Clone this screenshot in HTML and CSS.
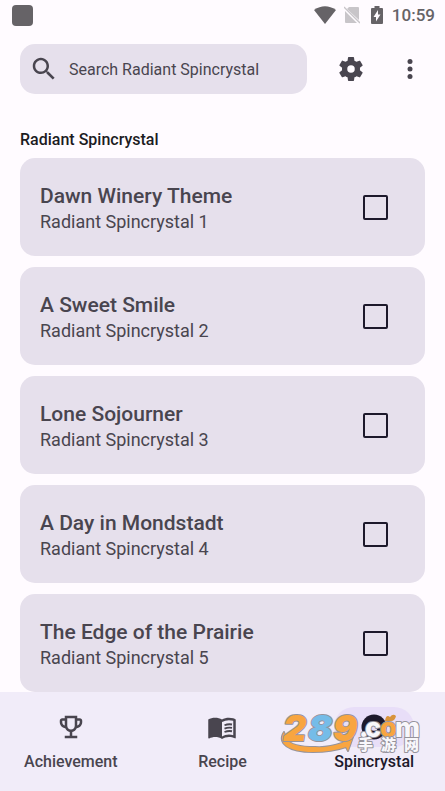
FILE: index.html
```html
<!DOCTYPE html>
<html lang="en">
<head>
<meta charset="utf-8">
<meta name="viewport" content="width=device-width, initial-scale=1">
<title>Radiant Spincrystal</title>
<link rel="stylesheet" href="styles.css">
</head>
<body>
<div class="status">
  <span class="status-app"></span>
  <div class="status-icons">
    <svg width="22" height="18" viewBox="0 0 22 18"><path d="M0 4Q11-3.500 22 4L11 18Z" fill="currentColor"/></svg>
    <svg class="no-sim" width="16" height="18" viewBox="0 0 16 18"><path d="M5 1h9q1 0 1 1v12L3 3zM1 5l12 12H2q-1 0-1-1z" fill="currentColor"/><path d="M0 1l16 16" stroke="currentColor" stroke-width="1.300"/></svg>
    <svg width="12" height="18" viewBox="0 0 12 18"><path d="M3.500 0h5v2H11q1 0 1 1v14q0 1-1 1H1q-1 0-1-1V3q0-1 1-1h2.500z" fill="currentColor"/><path d="M7 4L2.500 11H5v4.500L9.500 8.500H7z" fill="#fffbff"/></svg>
    <time>10:59</time>
  </div>
</div>
<header class="toolbar">
  <label class="search">
    <svg width="30" height="30" viewBox="0 0 24 24"><path fill="currentColor" d="M15.500 14h-.79l-.28-.27C15.410 12.590 16 11.110 16 9.500 16 5.910 13.090 3 9.500 3S3 5.910 3 9.500 5.910 16 9.500 16c1.610 0 3.090-.59 4.230-1.570l.27.28v.79l5 4.990L20.490 19l-4.990-5zm-6 0C7.010 14 5 11.990 5 9.500S7.010 5 9.500 5 14 7.010 14 9.500 11.990 14 9.500 14z"/></svg>
    <input type="search" placeholder="Search Radiant Spincrystal" aria-label="Search Radiant Spincrystal">
  </label>
  <div class="actions">
    <button type="button" aria-label="Settings"><svg width="30" height="30" viewBox="0 0 24 24"><path fill="currentColor" d="M19.140 12.940c.04-.3.06-.61.06-.94 0-.32-.02-.64-.07-.94l2.030-1.580c.18-.14.23-.41.12-.61l-1.920-3.320c-.12-.22-.37-.29-.59-.22l-2.390.96c-.5-.38-1.030-.7-1.620-.94L14.400 2.810c-.04-.24-.24-.41-.48-.41h-3.840c-.24 0-.43.17-.47.41L9.250 5.350C8.660 5.590 8.120 5.920 7.630 6.290L5.240 5.330c-.22-.08-.47 0-.59.22L2.740 8.870c-.12.21-.08.47.12.61l2.030 1.580C4.840 11.360 4.800 11.690 4.800 12s.02.64.07.94l-2.030 1.580c-.18.14-.23.41-.12.61l1.920 3.320c.12.22.37.29.59.22l2.390-.96c.5.38 1.030.7 1.620.94l.36 2.540c.05.24.24.41.48.41h3.840c.24 0 .44-.17.47-.41l.36-2.540c.59-.24 1.130-.56 1.620-.94l2.390.96c.22.08.47 0 .59-.22l1.920-3.320c.12-.22.07-.47-.12-.61L19.140 12.940zM12 15a3 3 0 1 1 0-6 3 3 0 0 1 0 6z"/></svg></button>
    <button type="button" aria-label="More options"><svg width="30" height="30" viewBox="0 0 24 24" fill="currentColor"><circle cx="12" cy="6" r="2"/><circle cx="12" cy="12" r="2"/><circle cx="12" cy="18" r="2"/></svg></button>
  </div>
</header>
<main class="content">
  <h1>Radiant Spincrystal</h1>
  <div class="list">
    <label class="card"><span class="card-text"><span class="title">Dawn Winery Theme</span><span class="subtitle">Radiant Spincrystal 1</span></span><input type="checkbox"></label>
    <label class="card"><span class="card-text"><span class="title">A Sweet Smile</span><span class="subtitle">Radiant Spincrystal 2</span></span><input type="checkbox"></label>
    <label class="card"><span class="card-text"><span class="title">Lone Sojourner</span><span class="subtitle">Radiant Spincrystal 3</span></span><input type="checkbox"></label>
    <label class="card"><span class="card-text"><span class="title">A Day in Mondstadt</span><span class="subtitle">Radiant Spincrystal 4</span></span><input type="checkbox"></label>
    <label class="card"><span class="card-text"><span class="title">The Edge of the Prairie</span><span class="subtitle">Radiant Spincrystal 5</span></span><input type="checkbox"></label>
  </div>
</main>
<nav class="tabs">
  <a href="#achievement"><span class="pill"><svg width="30" height="30" viewBox="0 0 24 24"><path fill="currentColor" d="M19 5h-2V3H7v2H5c-1.100 0-2 .9-2 2v1c0 2.550 1.920 4.630 4.390 4.940.63 1.500 1.980 2.630 3.610 2.960V19H7v2h10v-2h-4v-3.100c1.630-.33 2.980-1.460 3.610-2.960C19.080 12.630 21 10.550 21 8V7c0-1.100-.9-2-2-2zM5 8V7h2v3.820C5.840 10.400 5 9.300 5 8zm7 6c-1.650 0-3-1.350-3-3V5h6v6c0 1.650-1.350 3-3 3zm7-6c0 1.300-.84 2.400-2 2.820V7h2v1z"/></svg></span>Achievement</a>
  <a href="#recipe"><span class="pill"><svg width="30" height="30" viewBox="0 0 24 24"><path fill="currentColor" d="M21 5c-1.110-.35-2.330-.5-3.500-.5-1.950 0-4.050.4-5.500 1.500-1.450-1.100-3.550-1.500-5.500-1.500S2.450 4.900 1 6v14.650c0 .25.25.5.5.5.1 0 .15-.05.25-.05C3.100 20.450 5.050 20 6.500 20c1.950 0 4.050.4 5.500 1.500 1.350-.85 3.800-1.500 5.500-1.500 1.650 0 3.350.3 4.750 1.050.1.05.15.05.25.05.25 0 .5-.25.5-.5V6c-.6-.45-1.250-.75-2-1zm0 13.500c-1.100-.35-2.300-.5-3.500-.5-1.700 0-4.150.65-5.500 1.500V8c1.350-.85 3.800-1.500 5.500-1.500 1.200 0 2.400.15 3.500.5v11.500z"/><path d="M14 10.600q3-1.200 6-.6M14 13.300q3-1.200 6-.6M14 16q3-1.200 6-.6" fill="none" stroke="currentColor" stroke-width="1.500"/></svg></span>Recipe</a>
  <a class="active" href="#spincrystal" aria-current="page"><span class="pill"><svg width="30" height="30" viewBox="0 0 24 24"><circle cx="12" cy="12" r="10" fill="#1d192b"/><circle cx="12" cy="12" r="3" fill="#e8def8"/></svg></span>Spincrystal</a>
  <svg class="mark" width="146" height="50" viewBox="0 0 146 50" role="img" aria-label="289.com 手游网">
    <path d="M4 22C-3 33 8 42 33 42Q52 42 66 37L68 41L73 27L62 33Q48 38 35 37Q12 37 6 29Z" class="orange"/>
    <g class="digits"><text x="3" y="31" class="orange">2</text><text x="28" y="31" class="blue">8</text><text x="53" y="31" class="orange">9</text></g>
    <g class="com"><text x="79" y="27">.</text><text x="85" y="27">c</text><text x="100" y="27" class="orange">o</text><text x="115" y="27">m</text></g>
    <path d="M105 11q1-7 5-4q3-4 6-1q-1 5-5 5z" class="leaf"/>
    <g class="cjk"><text x="78" y="40">手</text><text x="101" y="40">游</text><text x="124" y="40">网</text></g>
  </svg>
</nav>
</body>
</html>
```
FILE: styles.css
```css
* { box-sizing: border-box; }

body {
  display: flex;
  flex-direction: column;
  height: 100vh;
  margin: 0;
  overflow: hidden;
  background: #fffbff;
  color: #49454f;
  font-family: Roboto, "Noto Sans CJK SC", sans-serif;
}

svg { display: block; flex: none; }

.status {
  display: flex;
  flex: none;
  align-items: center;
  justify-content: space-between;
  height: 30px;
  padding: 0 10px 0 12px;
  color: #666367;
}

.status-app {
  width: 21px;
  height: 21px;
  border-radius: 4px;
  background: #666367;
}

.status-icons { display: flex; align-items: center; }
.no-sim { margin: 0 11px 0 8px; color: #c8c5c9; }
.status time { margin-left: 9px; font-size: 17px; font-weight: 500; }

.toolbar {
  display: flex;
  flex: none;
  align-items: center;
  gap: 29px;
  padding: 14px 20px 0;
}

.search {
  display: flex;
  flex: 1;
  align-items: center;
  gap: 10px;
  min-width: 0;
  height: 50px;
  padding: 0 9px;
  border-radius: 15px;
  background: #e6e0ec;
}

.search input {
  flex: 1;
  min-width: 0;
  padding: 2px 0 0;
  border: 0;
  outline: 0;
  background: none;
  color: inherit;
  font: 400 16px/20px Roboto, sans-serif;
}

.search input::placeholder { color: inherit; opacity: 1; }

.actions { display: flex; gap: 29px; }

.actions button {
  padding: 0;
  border: 0;
  background: none;
  color: inherit;
}

.content {
  flex: 1;
  min-height: 0;
  padding: 34px 20px 0;
  overflow: hidden;
}

h1 {
  margin: 0 0 6px;
  color: #1c1b1f;
  font-size: 16px;
  font-weight: 500;
  line-height: 24px;
}

.list { display: flex; flex-direction: column; gap: 11px; }

.card {
  display: flex;
  align-items: center;
  justify-content: space-between;
  padding: 22px 37px 22px 20px;
  border-radius: 15px;
  background: #e6e0ec;
}

.card-text {
  display: flex;
  flex-direction: column;
  padding-top: 4px;
  line-height: 25px;
}

.title { font-size: 21px; font-weight: 500; }
.subtitle { font-size: 18px; }

.card input {
  width: 25px;
  height: 25px;
  margin: 0;
  appearance: none;
  border: 2px solid #1d192b;
  border-radius: 2px;
}

.card input:checked { background: #1d192b; }

.tabs {
  position: relative;
  display: grid;
  flex: none;
  grid-template-columns: repeat(3, 1fr);
  gap: 10px;
  padding: 15px 0 19px;
  background: #f1ecf9;
}

.tabs a {
  display: flex;
  flex-direction: column;
  align-items: center;
  gap: 5px;
  color: inherit;
  font-size: 16px;
  font-weight: 500;
  line-height: 20px;
  text-decoration: none;
}

.tabs .active { color: #1d192b; }

.pill {
  display: grid;
  place-items: center;
  width: 80px;
  height: 40px;
  border-radius: 20px;
}

.active .pill { background: #e8def8; }

.mark {
  position: absolute;
  right: 19px;
  bottom: 31px;
  overflow: visible;
  paint-order: stroke;
  fill: #f8f7fb;
  stroke: #96939b;
  stroke-width: 2px;
  stroke-linejoin: round;
}

.mark .orange { fill: #f8a540; }
.mark .blue { fill: #75bce8; }
.mark .leaf { fill: #d8933c; stroke: none; }
.digits { font: italic 900 36px Inter, sans-serif; }
.com { font: 800 27px Inter, sans-serif; }
.cjk { font: 900 15px "Noto Sans CJK SC", sans-serif; }
```
